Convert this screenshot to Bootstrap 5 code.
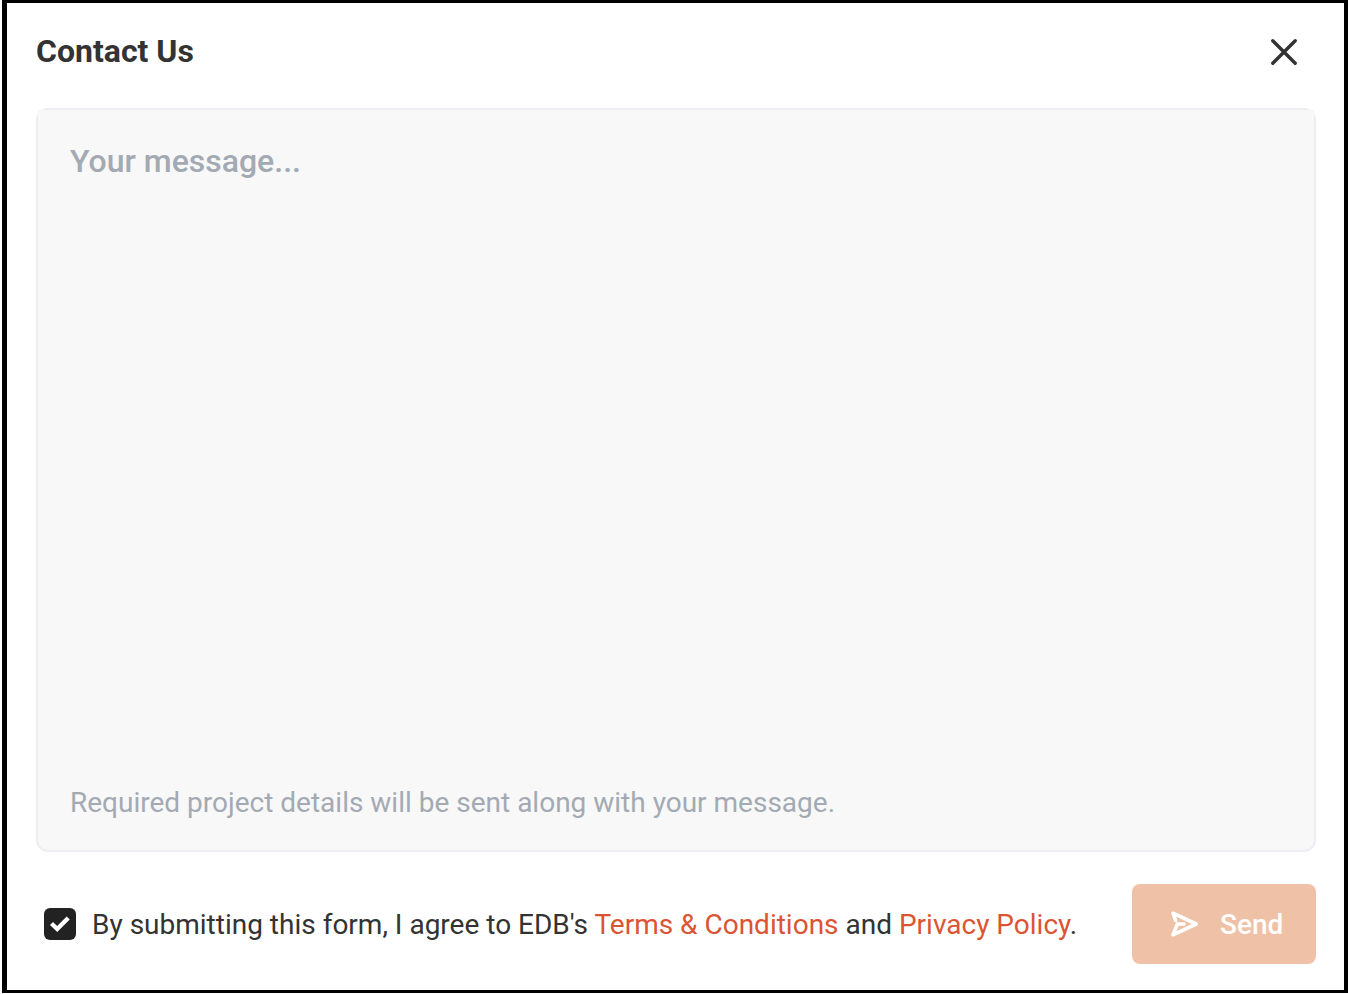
<!DOCTYPE html>
<html lang="en">
<head>
<meta charset="utf-8">
<meta name="viewport" content="width=device-width, initial-scale=1">
<title>Contact Us</title>
<link href="https://cdn.jsdelivr.net/npm/bootstrap@5.3.0/dist/css/bootstrap.min.css" rel="stylesheet">
<style>
  body { font-family: Roboto, "Liberation Sans", sans-serif; color: #333; background: #fff; font-size: 28px; line-height: 40px; }
  .contact-dialog { border: solid #000; border-width: 3px 4px 3px 5px; margin: 0 0 1px 2px; padding: 28px 28px 26px 29px; }
  .contact-title { font-size: 32px; line-height: 40px; font-weight: 700; }
  .close-btn { width: 64px; height: 40px; color: #333; }
  .message-box { background: #f8f8f8; border: 2px solid #ededf4; border-radius: 12px; margin-top: 37px; }
  .message-input { background: #f8f8f8; border-radius: 0; resize: none; padding: 31px 32px 0; font-size: 32px; line-height: 40px; font-weight: 500; }
  .message-input:focus { background: #f8f8f8; box-shadow: none; }
  .message-input::placeholder, .message-note { color: #a3aab3; opacity: 1; }
  .message-note { padding: 0 32px 27px; }
  .form-footer { margin-top: 32px; padding-left: 8px; }
  .footer-text { padding-top: 2px; }
  .agree-check.form-check-input { width: 32px; height: 32px; border: 0; border-radius: 6px; }
  .agree-check:checked { background-color: #222;
    background-image: url("data:image/svg+xml,%3Csvg xmlns='http://www.w3.org/2000/svg' viewBox='0 0 32 32'%3E%3Cpath d='M7.5 15.5 13.2 21 24.2 10' fill='none' stroke='%23fff' stroke-width='4.4'/%3E%3C/svg%3E"); }
  .terms-link { color: #db5533; }
  .send-btn.btn { min-width: 184px; height: 80px; padding: 0 32px; border: 0; border-radius: 8px; background: #efc1a6; color: #fff; font-size: 28px; font-weight: 500; }
</style>
</head>
<body>
<form class="d-flex flex-column min-vh-100" onsubmit="return false">
  <div class="contact-dialog d-flex flex-column flex-grow-1">
    <header class="d-flex align-items-center justify-content-between">
      <h1 class="contact-title m-0">Contact Us</h1>
      <button type="button" class="btn close-btn border-0 p-0 d-flex align-items-center justify-content-center" aria-label="Close">
        <svg width="28" height="28" viewBox="0 0 28 28" fill="none" stroke="currentColor" stroke-width="3.4" stroke-linecap="round"><path d="M2.8 3.8 25.2 26.2M25.2 3.8 2.8 26.2"/></svg>
      </button>
    </header>
    <div class="message-box d-flex flex-column flex-grow-1">
      <textarea class="message-input form-control border-0 flex-grow-1" placeholder="Your message..." aria-label="Your message" aria-describedby="note"></textarea>
      <p id="note" class="message-note m-0">Required project details will be sent along with your message.</p>
    </div>
    <footer class="form-footer d-flex align-items-center justify-content-between">
      <div class="d-flex align-items-center gap-3">
        <input type="checkbox" id="agree" class="form-check-input agree-check m-0 flex-shrink-0" checked>
        <label for="agree" class="footer-text">By submitting this form, I agree to EDB's <a href="#" class="terms-link text-decoration-none">Terms &amp; Conditions</a> and <a href="#" class="terms-link text-decoration-none">Privacy Policy</a>.</label>
      </div>
      <button type="submit" class="btn send-btn d-flex align-items-center gap-3">
        <svg width="40" height="40" viewBox="0 0 40 40" fill="none" stroke="currentColor" stroke-width="3.6" stroke-linecap="round" stroke-linejoin="round"><path d="M11.6 16.5 9 9.2 32.2 20 9 30.8 13.4 20H20"/></svg>
        <span class="footer-text">Send</span>
      </button>
    </footer>
  </div>
</form>
<script src="https://cdn.jsdelivr.net/npm/bootstrap@5.3.0/dist/js/bootstrap.bundle.min.js"></script>
</body>
</html>
